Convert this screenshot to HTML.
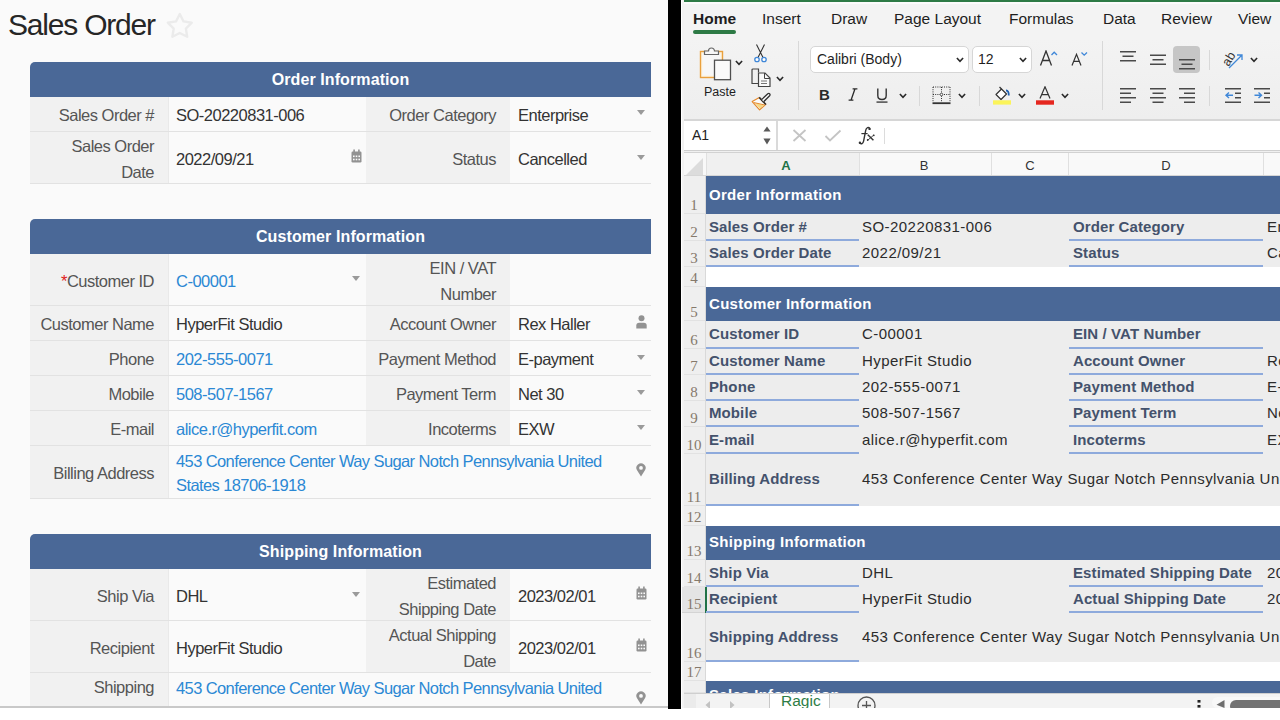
<!DOCTYPE html><html><head><meta charset='utf-8'><style>
*{margin:0;padding:0;box-sizing:border-box}
html,body{width:1280px;height:720px;overflow:hidden;background:#fff;font-family:"Liberation Sans",sans-serif}
.a{position:absolute}
#left{position:absolute;left:0;top:0;width:668px;height:708px;background:#fafafa;overflow:hidden}
.title{position:absolute;left:8px;top:5px;font-size:30px;color:#262626;letter-spacing:-1.2px;white-space:nowrap;line-height:40px}
.hdr{position:absolute;left:30px;width:621px;height:35px;background:#4a6897;border-radius:5px 0 0 0;color:#fff;font-weight:bold;font-size:16px;text-align:center;line-height:35px;letter-spacing:0.1px}
.row{position:absolute;left:30px;width:621px;border-bottom:1px solid #e2e2e2}
.c{position:absolute;top:0;bottom:0;display:flex;align-items:center;font-size:16.5px;line-height:25.5px;letter-spacing:-0.5px;white-space:nowrap;padding-top:4px}
.l1{left:0;width:139px;background:#f1f1f1;justify-content:flex-end;padding-right:14px;color:#555;text-align:right;border-right:1px solid #e9e9e9}
.v1{left:139px;width:197px;padding-left:7px;color:#333}
.l2{left:336px;width:144px;background:#f1f1f1;justify-content:flex-end;padding-right:14px;color:#555;text-align:right}
.v2{left:480px;width:141px;padding-left:8px;color:#333}
.lnk{color:#2b88d4}
.tri{position:absolute;width:0;height:0;border-left:4px solid transparent;border-right:4px solid transparent;border-top:5px solid #9a9a9a}
#blk{position:absolute;left:668px;top:0;width:13px;height:709px;background:#000}
#xl{position:absolute;left:681px;top:0;width:599px;height:708px;background:#f3f3f3;overflow:hidden;border-left:1px solid #fff}
.tab{position:absolute;top:8px;font-size:15px;color:#222;line-height:20px;white-space:nowrap}
.xc{position:absolute;white-space:nowrap;font-size:15px;line-height:20px}
.lab{color:#3d4e6a;font-weight:bold;letter-spacing:0.1px}
.val{color:#222;letter-spacing:0.3px}
.rn{position:absolute;left:2px;width:18px;text-align:center;font-family:"Liberation Serif",serif;font-size:15px;color:#85796b;line-height:16px}
</style></head><body>
<div id='left'>
<div class='title'>Sales Order</div>
<svg class='a' style='left:166px;top:11px' width='28' height='29' viewBox='0 0 28 29'><path d='M13.80 3.00 L17.56 10.42 L25.78 11.71 L19.89 17.58 L21.21 25.79 L13.80 22.00 L6.39 25.79 L7.71 17.58 L1.82 11.71 L10.04 10.42 Z' fill='none' stroke='#ebebeb' stroke-width='2.4' stroke-linejoin='round'/></svg>
<div class='hdr' style='top:62px'>Order Information</div>
<div class='row' style='top:97px;height:35px'>
<div class='c l1' style=''>Sales Order #</div>
<div class='c v1' style=''>SO-20220831-006</div>
<div class='c l2' style=''>Order Category</div>
<div class='c v2' style=''>Enterprise</div>
</div>
<div class='tri' style='left:637px;top:110px'></div>
<div class='row' style='top:132px;height:52px'>
<div class='c l1' style=''>Sales Order<br>Date</div>
<div class='c v1' style=''>2022/09/21</div>
<div class='c l2' style=''>Status</div>
<div class='c v2' style=''>Cancelled</div>
</div>
<svg class='a' style='left:351px;top:149px' width='11' height='14' viewBox='0 0 11 14'><rect x='0.5' y='2.5' width='10' height='11' rx='1.2' fill='#929292'/><rect x='2.3' y='0.5' width='1.6' height='3' fill='#929292'/><rect x='7.1' y='0.5' width='1.6' height='3' fill='#929292'/><g fill='#fafafa'><rect x='2' y='6.5' width='1.6' height='1.6'/><rect x='4.7' y='6.5' width='1.6' height='1.6'/><rect x='7.4' y='6.5' width='1.6' height='1.6'/><rect x='2' y='9.7' width='1.6' height='1.6'/><rect x='4.7' y='9.7' width='1.6' height='1.6'/><rect x='7.4' y='9.7' width='1.6' height='1.6'/></g></svg>
<div class='tri' style='left:637px;top:155px'></div>
<div class='hdr' style='top:219px'>Customer Information</div>
<div class='row' style='top:254px;height:52px'>
<div class='c l1' style=''><span style='color:#e02020'>*</span>Customer ID</div>
<div class='c v1' style=''><span class='lnk'>C-00001</span></div>
<div class='c l2' style=''>EIN / VAT<br>Number</div>
<div class='c v2' style=''></div>
</div>
<div class='tri' style='left:352px;top:276px'></div>
<div class='row' style='top:306px;height:35px'>
<div class='c l1' style=''>Customer Name</div>
<div class='c v1' style=''>HyperFit Studio</div>
<div class='c l2' style=''>Account Owner</div>
<div class='c v2' style=''>Rex Haller</div>
</div>
<svg class='a' style='left:636px;top:315px' width='11' height='14' viewBox='0 0 11 14'><circle cx='5.5' cy='3.3' r='3' fill='#929292'/><path d='M0.3 13.4 V10.6 Q0.3 7.8 3.2 7.8 H7.8 Q10.7 7.8 10.7 10.6 V13.4 Z' fill='#929292'/></svg>
<div class='row' style='top:341px;height:35px'>
<div class='c l1' style=''>Phone</div>
<div class='c v1' style=''><span class='lnk'>202-555-0071</span></div>
<div class='c l2' style=''>Payment Method</div>
<div class='c v2' style=''>E-payment</div>
</div>
<div class='tri' style='left:637px;top:355px'></div>
<div class='row' style='top:376px;height:35px'>
<div class='c l1' style=''>Mobile</div>
<div class='c v1' style=''><span class='lnk'>508-507-1567</span></div>
<div class='c l2' style=''>Payment Term</div>
<div class='c v2' style=''>Net 30</div>
</div>
<div class='tri' style='left:637px;top:390px'></div>
<div class='row' style='top:411px;height:35px'>
<div class='c l1' style=''>E-mail</div>
<div class='c v1' style=''><span class='lnk'>alice.r@hyperfit.com</span></div>
<div class='c l2' style=''>Incoterms</div>
<div class='c v2' style=''>EXW</div>
</div>
<div class='tri' style='left:637px;top:425px'></div>
<div class='row' style='top:446px;height:53px'>
<div class='c l1' style=''>Billing Address</div>
<div class='c' style='left:139px;width:482px;padding-left:7px;color:#2b88d4;white-space:normal;line-height:24.5px;letter-spacing:-0.6px;padding-top:2px'>453 Conference Center Way Sugar Notch Pennsylvania United<br>States 18706-1918</div>
</div>
<svg class='a' style='left:636px;top:463px' width='10' height='14' viewBox='0 0 10 14'><path d='M5 13.6 L1.2 7.6 A4.6 4.6 0 1 1 8.8 7.6 Z' fill='#929292'/><circle cx='5' cy='4.9' r='1.9' fill='#fafafa'/></svg>
<div class='hdr' style='top:534px'>Shipping Information</div>
<div class='row' style='top:569px;height:52px'>
<div class='c l1' style=''>Ship Via</div>
<div class='c v1' style=''>DHL</div>
<div class='c l2' style=''>Estimated<br>Shipping Date</div>
<div class='c v2' style=''>2023/02/01</div>
</div>
<div class='tri' style='left:352px;top:592px'></div>
<svg class='a' style='left:636px;top:586px' width='11' height='14' viewBox='0 0 11 14'><rect x='0.5' y='2.5' width='10' height='11' rx='1.2' fill='#929292'/><rect x='2.3' y='0.5' width='1.6' height='3' fill='#929292'/><rect x='7.1' y='0.5' width='1.6' height='3' fill='#929292'/><g fill='#fafafa'><rect x='2' y='6.5' width='1.6' height='1.6'/><rect x='4.7' y='6.5' width='1.6' height='1.6'/><rect x='7.4' y='6.5' width='1.6' height='1.6'/><rect x='2' y='9.7' width='1.6' height='1.6'/><rect x='4.7' y='9.7' width='1.6' height='1.6'/><rect x='7.4' y='9.7' width='1.6' height='1.6'/></g></svg>
<div class='row' style='top:621px;height:52px'>
<div class='c l1' style=''>Recipient</div>
<div class='c v1' style=''>HyperFit Studio</div>
<div class='c l2' style=''>Actual Shipping<br>Date</div>
<div class='c v2' style=''>2023/02/01</div>
</div>
<svg class='a' style='left:636px;top:638px' width='11' height='14' viewBox='0 0 11 14'><rect x='0.5' y='2.5' width='10' height='11' rx='1.2' fill='#929292'/><rect x='2.3' y='0.5' width='1.6' height='3' fill='#929292'/><rect x='7.1' y='0.5' width='1.6' height='3' fill='#929292'/><g fill='#fafafa'><rect x='2' y='6.5' width='1.6' height='1.6'/><rect x='4.7' y='6.5' width='1.6' height='1.6'/><rect x='7.4' y='6.5' width='1.6' height='1.6'/><rect x='2' y='9.7' width='1.6' height='1.6'/><rect x='4.7' y='9.7' width='1.6' height='1.6'/><rect x='7.4' y='9.7' width='1.6' height='1.6'/></g></svg>
<div class='row' style='top:673px;height:35px;border-bottom:none'>
<div class='c l1' style='top:0;bottom:auto;height:35px;align-items:flex-start;padding-top:2px'>Shipping</div>
<div class='c' style='left:139px;width:482px;padding-left:7px;color:#2b88d4;align-items:flex-start;padding-top:3px;letter-spacing:-0.6px'>453 Conference Center Way Sugar Notch Pennsylvania United</div>
</div>
<svg class='a' style='left:636px;top:691px' width='10' height='14' viewBox='0 0 10 14'><path d='M5 13.6 L1.2 7.6 A4.6 4.6 0 1 1 8.8 7.6 Z' fill='#929292'/><circle cx='5' cy='4.9' r='1.9' fill='#fafafa'/></svg>
<div class='a' style='left:0;top:706px;width:668px;height:2px;background:#c9c9c9'></div>
</div>
<div id='blk'></div>
<div id='xl'>
<div class='a' style='left:2px;top:0px;width:596px;height:2px;background:#2d7a45'></div>
<div class='a' style='left:2px;top:2px;width:596px;height:2px;background:#fbfbfb'></div>
<div class='a' style='left:2px;top:4px;width:596px;height:115px;background:linear-gradient(#f3f3f3 0px,#f3f3f3 35px,#eeeeee 115px)'></div>
<div class='a' style='left:0px;top:0px;width:2px;height:708px;background:#f2f2f2'></div>
<div class='a' style='left:11px;top:8.5px;white-space:nowrap;font-size:15.5px;line-height:20px;color:#1e1e1e;font-weight:bold'>Home</div>
<div class='a' style='left:80px;top:8.5px;white-space:nowrap;font-size:15.5px;line-height:20px;color:#1e1e1e;'>Insert</div>
<div class='a' style='left:149px;top:8.5px;white-space:nowrap;font-size:15.5px;line-height:20px;color:#1e1e1e;'>Draw</div>
<div class='a' style='left:212px;top:8.5px;white-space:nowrap;font-size:15.5px;line-height:20px;color:#1e1e1e;'>Page Layout</div>
<div class='a' style='left:327px;top:8.5px;white-space:nowrap;font-size:15.5px;line-height:20px;color:#1e1e1e;'>Formulas</div>
<div class='a' style='left:421px;top:8.5px;white-space:nowrap;font-size:15.5px;line-height:20px;color:#1e1e1e;'>Data</div>
<div class='a' style='left:479px;top:8.5px;white-space:nowrap;font-size:15.5px;line-height:20px;color:#1e1e1e;'>Review</div>
<div class='a' style='left:556px;top:8.5px;white-space:nowrap;font-size:15.5px;line-height:20px;color:#1e1e1e;'>View</div>
<div class='a' style='left:11px;top:30px;width:43px;height:4px;background:#2d7a45;border-radius:2px'></div>
<div class='a' style='left:2px;top:119px;width:596px;height:2px;background:#d6d6d6'></div>
<div class='a' style='left:2px;top:121px;width:596px;height:29px;background:#fff'></div>
<div class='a' style='left:2px;top:150px;width:596px;height:1px;background:#cfcfcf'></div>
<div class='a' style='left:2px;top:151px;width:596px;height:1px;background:#f0f0f0'></div>
<div class='a' style='left:2px;top:152px;width:596px;height:1px;background:#d2d2d2'></div>
<div class='a' style='left:94px;top:121px;width:2px;height:29px;background:#dadada'></div>
<div class='a' style='left:10px;top:125px;white-space:nowrap;font-size:14px;line-height:20px;color:#222'>A1</div>
<svg class='a' style='left:81px;top:126px' width='8' height='19' viewBox='0 0 8 19'><path d='M4 0.5 L7.6 5.6 H0.4 Z M4 18.5 L7.6 12.4 H0.4 Z' fill='#5a5a5a'/></svg>
<svg class='a' style='left:110px;top:129px' width='15' height='13' viewBox='0 0 15 13'><path d='M1.5 1 L13.5 12 M13.5 1 L1.5 12' stroke='#c4c4c4' stroke-width='1.8'/></svg>
<svg class='a' style='left:142px;top:129px' width='18' height='13' viewBox='0 0 18 13'><path d='M1.5 7 L6 11.5 L16.5 1.5' stroke='#c4c4c4' stroke-width='1.8' fill='none'/></svg>
<svg class='a' style='left:170px;top:122px' width='30' height='26' viewBox='0 0 30 26'><g fill='none' stroke='#333'><path d='M17.8 6.4 C16.6 4.9 14.3 5.1 13.7 8.4 L11.6 19.2 C11.1 21.8 9.2 22.3 7.8 21.2' stroke-width='1.4'/><path d='M9.4 11.6 H15.6' stroke-width='1.2'/><path d='M15.8 12.8 L21.4 18.3' stroke-width='1.5'/><path d='M22 12.9 L15.6 18.3' stroke-width='0.9'/></g><g fill='#333'><circle cx='17.6' cy='6.9' r='1.2'/><circle cx='7.9' cy='20.8' r='1.2'/><circle cx='21.8' cy='13.3' r='0.9'/><circle cx='15.7' cy='18' r='0.9'/></g></svg>
<div class='a' style='left:202px;top:128px;width:1px;height:16px;background:#dcdcdc'></div>
<div class='a' style='left:116px;top:41px;width:1px;height:69px;background:#d8d8d8'></div>
<div class='a' style='left:420px;top:41px;width:1px;height:69px;background:#d8d8d8'></div>
<div class='a' style='left:237px;top:86px;width:1px;height:20px;background:#d8d8d8'></div>
<div class='a' style='left:297px;top:86px;width:1px;height:20px;background:#d8d8d8'></div>
<div class='a' style='left:527px;top:50px;width:1px;height:20px;background:#d8d8d8'></div>
<div class='a' style='left:527px;top:86px;width:1px;height:20px;background:#d8d8d8'></div>
<svg class='a' style='left:17px;top:45px' width='34' height='37' viewBox='0 0 34 37'><rect x='1.5' y='6.5' width='22' height='26' fill='#fdf3df' stroke='#e9a03d' stroke-width='1.4'/><rect x='3.5' y='8.5' width='18' height='22' fill='#f7f7f7'/><path d='M5.5 9.5 V6 H9.5 A3 3 0 0 1 15.5 6 H19.5 V9.5 Z' fill='#f7f7f7' stroke='#666' stroke-width='1.2'/><rect x='15.5' y='15.2' width='16' height='19.5' fill='#fafafa' stroke='#4f4f4f' stroke-width='1.3'/></svg>
<svg class='a' style='left:53px;top:60px' width='8' height='6' viewBox='0 0 8 6'><path d='M0.9 1 L4 4.3 L7.1 1' fill='none' stroke='#2a2a2a' stroke-width='1.6'/></svg>
<div class='a' style='left:22px;top:84px;white-space:nowrap;font-size:12.5px;line-height:16px;color:#1e1e1e'>Paste</div>
<svg class='a' style='left:71px;top:44px' width='15' height='19' viewBox='0 0 15 19'><path d='M3.5 0.5 L10 13.5 M11.5 0.5 L5 13.5' stroke='#333' stroke-width='1.1'/><circle cx='4' cy='15.5' r='2.2' fill='#fff' stroke='#3f87d8' stroke-width='1.3'/><circle cx='11' cy='15.5' r='2.2' fill='#fff' stroke='#3f87d8' stroke-width='1.3'/></svg>
<svg class='a' style='left:69px;top:68px' width='21' height='20' viewBox='0 0 21 20'><path d='M7.5 4.5 V1 H2 Q1 1 1 2 V15.5 H7' fill='none' stroke='#444' stroke-width='1.2'/><path d='M7.5 5 H14 L19 10 V18.5 H7.5 Z' fill='#fafafa' stroke='#444' stroke-width='1.2'/><path d='M13.5 5 V10.5 H19' fill='none' stroke='#444' stroke-width='1'/><path d='M10 13 H16 M10 15.5 H16' stroke='#666' stroke-width='0.9'/></svg>
<svg class='a' style='left:94px;top:76px' width='8' height='6' viewBox='0 0 8 6'><path d='M0.9 1 L4 4.3 L7.1 1' fill='none' stroke='#2a2a2a' stroke-width='1.6'/></svg>
<svg class='a' style='left:66px;top:90px' width='26' height='24' viewBox='0 0 26 24'><path d='M4.2 11.6 L11.3 7.6 L17.8 14.4 L11.6 19.8 Z' fill='#fbfbfb' stroke='#e5892c' stroke-width='1.2' stroke-linejoin='round'/><path d='M6.8 12.9 L16.2 15.2 L11.8 18.6 Z' fill='#f5d985'/><path d='M6 12.6 L16.8 15' stroke='#e5892c' stroke-width='1'/><path d='M11.2 7.4 L17.9 14.5' stroke='#2f2f2f' stroke-width='1.6'/><path d='M13.6 9.6 L19.8 3.8 Q20.9 3 21.7 3.9 Q22.4 4.8 21.6 5.7 L15.6 11.8' fill='#fbfbfb' stroke='#2f2f2f' stroke-width='1.3' stroke-linejoin='round'/></svg>
<div class='a' style='left:128px;top:46px;width:159px;height:27px;background:#fff;border:1px solid #d6d6d6;border-radius:5px'></div>
<div class='a' style='left:135px;top:50px;white-space:nowrap;font-size:14px;line-height:18px;color:#1e1e1e'>Calibri (Body)</div>
<svg class='a' style='left:274px;top:57px' width='8' height='6' viewBox='0 0 8 6'><path d='M0.9 1 L4 4.3 L7.1 1' fill='none' stroke='#2a2a2a' stroke-width='1.6'/></svg>
<div class='a' style='left:290px;top:46px;width:60px;height:27px;background:#fff;border:1px solid #d6d6d6;border-radius:5px'></div>
<div class='a' style='left:296px;top:50px;white-space:nowrap;font-size:14px;line-height:18px;color:#1e1e1e'>12</div>
<svg class='a' style='left:337px;top:57px' width='8' height='6' viewBox='0 0 8 6'><path d='M0.9 1 L4 4.3 L7.1 1' fill='none' stroke='#2a2a2a' stroke-width='1.6'/></svg>
<svg class='a' style='left:357px;top:50px' width='20' height='17' viewBox='0 0 20 17'><path d='M1.5 15.5 L7 1 L12.5 15.5 M3.5 10.5 H10.5' fill='none' stroke='#333' stroke-width='1.3'/><path d='M12.5 5 L15.2 2.2 L18 5' fill='none' stroke='#3f87d8' stroke-width='1.3'/></svg>
<svg class='a' style='left:389px;top:50px' width='17' height='17' viewBox='0 0 17 17'><path d='M1 15.5 L5.5 4.3 L10 15.5 M2.8 11.3 H8.2' fill='none' stroke='#333' stroke-width='1.2'/><path d='M10.5 2.5 L13.2 5.2 L16 2.5' fill='none' stroke='#3f87d8' stroke-width='1.3'/></svg>
<div class='a' style='left:137px;top:86px;white-space:nowrap;font-size:15px;line-height:18px;font-weight:bold;color:#2a2a2a'>B</div>
<svg class='a' style='left:166px;top:88px' width='10' height='13' viewBox='0 0 10 13'><path d='M4.6 0.8 H9.4 M0.6 12.2 H5.4 M7 0.8 L3 12.2' fill='none' stroke='#2a2a2a' stroke-width='1.3'/></svg>
<svg class='a' style='left:194px;top:88px' width='12' height='16' viewBox='0 0 12 16'><path d='M1.8 0.5 V7.5 Q1.8 11.5 6 11.5 Q10.2 11.5 10.2 7.5 V0.5' fill='none' stroke='#333' stroke-width='1.4'/><rect x='0.5' y='13.3' width='11' height='1.6' fill='#555'/></svg>
<svg class='a' style='left:217px;top:93px' width='8' height='6' viewBox='0 0 8 6'><path d='M0.9 1 L4 4.3 L7.1 1' fill='none' stroke='#2a2a2a' stroke-width='1.6'/></svg>
<svg class='a' style='left:250px;top:86px' width='19' height='19' viewBox='0 0 19 19'><g stroke='#333' stroke-width='1' stroke-dasharray='1 1.2' fill='none'><path d='M1 1 H18 M1 1 V16 M18 1 V16 M9.5 1 V16 M1 8.5 H18'/></g><circle cx='9.5' cy='8.5' r='1.3' fill='#fff' stroke='#333' stroke-width='0.8'/><rect x='0.5' y='16.3' width='18' height='1.8' fill='#333'/></svg>
<svg class='a' style='left:276px;top:93px' width='8' height='6' viewBox='0 0 8 6'><path d='M0.9 1 L4 4.3 L7.1 1' fill='none' stroke='#2a2a2a' stroke-width='1.6'/></svg>
<svg class='a' style='left:311px;top:86px' width='19' height='19' viewBox='0 0 19 19'><path d='M3 8.5 L8.5 3 L13.5 8 L8 13.5 Z' fill='#fff' stroke='#333' stroke-width='1.2' stroke-linejoin='round'/><path d='M8.5 3 L6.5 1' stroke='#333' stroke-width='1.2'/><path d='M13 4.5 Q15.8 4.3 15.8 9.5' fill='none' stroke='#1f5fb0' stroke-width='1.8'/><rect x='0' y='14.3' width='18' height='4.3' fill='#fbf45a'/></svg>
<svg class='a' style='left:336px;top:93px' width='8' height='6' viewBox='0 0 8 6'><path d='M0.9 1 L4 4.3 L7.1 1' fill='none' stroke='#2a2a2a' stroke-width='1.6'/></svg>
<svg class='a' style='left:353px;top:86px' width='19' height='19' viewBox='0 0 19 19'><path d='M5 12.5 L10 0.8 L15 12.5 M6.7 8.6 H13.3' fill='none' stroke='#333' stroke-width='1.2'/><rect x='1' y='14.3' width='18' height='4.4' fill='#e5271f'/></svg>
<svg class='a' style='left:379px;top:93px' width='8' height='6' viewBox='0 0 8 6'><path d='M0.9 1 L4 4.3 L7.1 1' fill='none' stroke='#2a2a2a' stroke-width='1.6'/></svg>
<svg class='a' style='left:437px;top:40px' width='20' height='70' viewBox='0 0 20 70'><rect x='1' y='11' width='16' height='1.5' fill='#4a4a4a'/><rect x='3.5' y='15.5' width='11.0' height='1.5' fill='#4a4a4a'/><rect x='1' y='20' width='16' height='1.5' fill='#4a4a4a'/></svg>
<svg class='a' style='left:467px;top:40px' width='20' height='70' viewBox='0 0 20 70'><rect x='1' y='14.5' width='16' height='1.5' fill='#4a4a4a'/><rect x='3.5' y='19' width='11.0' height='1.5' fill='#4a4a4a'/><rect x='1' y='23.5' width='16' height='1.5' fill='#4a4a4a'/></svg>
<div class='a' style='left:491px;top:46px;width:27px;height:27px;background:#c6c6c6;border-radius:4px'></div>
<svg class='a' style='left:496px;top:40px' width='20' height='70' viewBox='0 0 20 70'><rect x='1' y='19' width='16' height='1.5' fill='#4a4a4a'/><rect x='3.5' y='23.5' width='11.0' height='1.5' fill='#4a4a4a'/><rect x='1' y='28' width='16' height='1.5' fill='#4a4a4a'/></svg>
<svg class='a' style='left:437px;top:40px' width='20' height='70' viewBox='0 0 20 70'><rect x='1' y='48' width='16' height='1.5' fill='#4a4a4a'/><rect x='1' y='52.5' width='11' height='1.5' fill='#4a4a4a'/><rect x='1' y='57' width='16' height='1.5' fill='#4a4a4a'/><rect x='1' y='61.5' width='11' height='1.5' fill='#4a4a4a'/></svg>
<svg class='a' style='left:467px;top:40px' width='20' height='70' viewBox='0 0 20 70'><rect x='1' y='48' width='16' height='1.5' fill='#4a4a4a'/><rect x='3.5' y='52.5' width='11.0' height='1.5' fill='#4a4a4a'/><rect x='1' y='57' width='16' height='1.5' fill='#4a4a4a'/><rect x='3.5' y='61.5' width='11.0' height='1.5' fill='#4a4a4a'/></svg>
<svg class='a' style='left:496px;top:40px' width='20' height='70' viewBox='0 0 20 70'><rect x='1' y='48' width='16' height='1.5' fill='#4a4a4a'/><rect x='6' y='52.5' width='11' height='1.5' fill='#4a4a4a'/><rect x='1' y='57' width='16' height='1.5' fill='#4a4a4a'/><rect x='6' y='61.5' width='11' height='1.5' fill='#4a4a4a'/></svg>
<svg class='a' style='left:540px;top:49px' width='22' height='20' viewBox='0 0 22 20'><text x='0' y='0' transform='translate(6.5,18) rotate(-58)' font-family='Liberation Sans' font-size='12.5' fill='#333'>ab</text><path d='M7 19 L19.5 6.5 M15 6 H20 V11' fill='none' stroke='#3f87d8' stroke-width='1.3'/></svg>
<svg class='a' style='left:568px;top:57px' width='8' height='6' viewBox='0 0 8 6'><path d='M0.9 1 L4 4.3 L7.1 1' fill='none' stroke='#2a2a2a' stroke-width='1.6'/></svg>
<svg class='a' style='left:542px;top:86px' width='19' height='20' viewBox='0 0 19 20'><rect x='1' y='2' width='16' height='1.5' fill='#4a4a4a'/><rect x='11' y='6.5' width='6' height='1.5' fill='#4a4a4a'/><rect x='11' y='11' width='6' height='1.5' fill='#4a4a4a'/><rect x='1' y='15.5' width='16' height='1.5' fill='#4a4a4a'/><path d='M2 9.2 H9 M5 6.5 L2 9.2 L5 12' fill='none' stroke='#3f87d8' stroke-width='1.4'/></svg>
<svg class='a' style='left:571px;top:86px' width='19' height='20' viewBox='0 0 19 20'><rect x='1' y='2' width='16' height='1.5' fill='#4a4a4a'/><rect x='11' y='6.5' width='6' height='1.5' fill='#4a4a4a'/><rect x='11' y='11' width='6' height='1.5' fill='#4a4a4a'/><rect x='1' y='15.5' width='16' height='1.5' fill='#4a4a4a'/><path d='M1.5 9.2 H8.5 M5.5 6.5 L8.5 9.2 L5.5 12' fill='none' stroke='#3f87d8' stroke-width='1.4'/></svg>
<div class='a' style='left:2px;top:153px;width:596px;height:23px;background:#f9f9f9'></div>
<div class='a' style='left:2px;top:153px;width:22px;height:23px;background:#f8f8f8'></div>
<div class='a' style='left:24px;top:153px;width:153px;height:23px;background:#f0f0f0'></div>
<svg class='a' style='left:4px;top:158px' width='18' height='17' viewBox='0 0 18 17'><path d='M17 0 V17 H0 Z' fill='#dcdcdc'/></svg>
<div class='a' style='left:24px;top:153px;width:1px;height:23px;background:#e0e0e0'></div>
<div class='a' style='left:177px;top:153px;width:1px;height:23px;background:#e0e0e0'></div>
<div class='a' style='left:309px;top:153px;width:1px;height:23px;background:#e0e0e0'></div>
<div class='a' style='left:386px;top:153px;width:1px;height:23px;background:#e0e0e0'></div>
<div class='a' style='left:581px;top:153px;width:1px;height:23px;background:#e0e0e0'></div>
<div class='a' style='left:94px;top:157px;white-space:nowrap;width:20px;text-align:center;font-size:13px;line-height:18px;color:#217346;font-weight:bold'>A</div>
<div class='a' style='left:232px;top:157px;white-space:nowrap;width:20px;text-align:center;font-size:13px;line-height:18px;color:#333;'>B</div>
<div class='a' style='left:338px;top:157px;white-space:nowrap;width:20px;text-align:center;font-size:13px;line-height:18px;color:#333;'>C</div>
<div class='a' style='left:474px;top:157px;white-space:nowrap;width:20px;text-align:center;font-size:13px;line-height:18px;color:#333;'>D</div>
<div class='a' style='left:2px;top:175px;width:596px;height:1px;background:#d6d6d6'></div>
<div class='a' style='left:2px;top:176px;width:22px;height:517px;background:#efefef'></div>
<div class='a' style='left:23px;top:176px;width:1px;height:517px;background:#d9d9d9'></div>
<div class='a' style='left:24px;top:176px;width:574px;height:38px;background:#4a6897'></div>
<div class='a' style='left:2px;top:213px;width:21px;height:1px;background:#e2e2e2'></div>
<div class='rn' style='left:3px;top:197px'>1</div>
<div class='a' style='left:24px;top:214px;width:574px;height:27px;background:#ededed'></div>
<div class='a' style='left:2px;top:240px;width:21px;height:1px;background:#e2e2e2'></div>
<div class='rn' style='left:3px;top:224px'>2</div>
<div class='a' style='left:24px;top:241px;width:574px;height:26px;background:#ededed'></div>
<div class='a' style='left:2px;top:266px;width:21px;height:1px;background:#e2e2e2'></div>
<div class='rn' style='left:3px;top:250px'>3</div>
<div class='a' style='left:24px;top:267px;width:574px;height:20px;background:#fff'></div>
<div class='a' style='left:2px;top:286px;width:21px;height:1px;background:#e2e2e2'></div>
<div class='rn' style='left:3px;top:270px'>4</div>
<div class='a' style='left:24px;top:287px;width:574px;height:34px;background:#4a6897'></div>
<div class='a' style='left:2px;top:320px;width:21px;height:1px;background:#e2e2e2'></div>
<div class='rn' style='left:3px;top:304px'>5</div>
<div class='a' style='left:24px;top:321px;width:574px;height:28px;background:#ededed'></div>
<div class='a' style='left:2px;top:348px;width:21px;height:1px;background:#e2e2e2'></div>
<div class='rn' style='left:3px;top:332px'>6</div>
<div class='a' style='left:24px;top:349px;width:574px;height:26px;background:#ededed'></div>
<div class='a' style='left:2px;top:374px;width:21px;height:1px;background:#e2e2e2'></div>
<div class='rn' style='left:3px;top:358px'>7</div>
<div class='a' style='left:24px;top:375px;width:574px;height:26px;background:#ededed'></div>
<div class='a' style='left:2px;top:400px;width:21px;height:1px;background:#e2e2e2'></div>
<div class='rn' style='left:3px;top:384px'>8</div>
<div class='a' style='left:24px;top:401px;width:574px;height:26px;background:#ededed'></div>
<div class='a' style='left:2px;top:426px;width:21px;height:1px;background:#e2e2e2'></div>
<div class='rn' style='left:3px;top:410px'>9</div>
<div class='a' style='left:24px;top:427px;width:574px;height:27px;background:#ededed'></div>
<div class='a' style='left:2px;top:453px;width:21px;height:1px;background:#e2e2e2'></div>
<div class='rn' style='left:3px;top:437px'>10</div>
<div class='a' style='left:24px;top:454px;width:574px;height:52px;background:#ededed'></div>
<div class='a' style='left:2px;top:505px;width:21px;height:1px;background:#e2e2e2'></div>
<div class='rn' style='left:3px;top:489px'>11</div>
<div class='a' style='left:24px;top:506px;width:574px;height:20px;background:#fff'></div>
<div class='a' style='left:2px;top:525px;width:21px;height:1px;background:#e2e2e2'></div>
<div class='rn' style='left:3px;top:509px'>12</div>
<div class='a' style='left:24px;top:526px;width:574px;height:34px;background:#4a6897'></div>
<div class='a' style='left:2px;top:559px;width:21px;height:1px;background:#e2e2e2'></div>
<div class='rn' style='left:3px;top:543px'>13</div>
<div class='a' style='left:24px;top:560px;width:574px;height:27px;background:#ededed'></div>
<div class='a' style='left:2px;top:586px;width:21px;height:1px;background:#e2e2e2'></div>
<div class='rn' style='left:3px;top:570px'>14</div>
<div class='a' style='left:24px;top:587px;width:574px;height:26px;background:#ededed'></div>
<div class='a' style='left:2px;top:612px;width:21px;height:1px;background:#e2e2e2'></div>
<div class='a' style='left:-1px;top:587px;width:24px;height:26px;background:#e4e4e4;border-bottom:1px solid #d4d4d4'></div>
<div class='a' style='left:23px;top:587px;width:2px;height:26px;background:#217346'></div>
<div class='rn' style='left:3px;top:596px'>15</div>
<div class='a' style='left:24px;top:613px;width:574px;height:49px;background:#ededed'></div>
<div class='a' style='left:2px;top:661px;width:21px;height:1px;background:#e2e2e2'></div>
<div class='rn' style='left:3px;top:645px'>16</div>
<div class='a' style='left:24px;top:662px;width:574px;height:19px;background:#fff'></div>
<div class='a' style='left:2px;top:680px;width:21px;height:1px;background:#e2e2e2'></div>
<div class='rn' style='left:3px;top:664px'>17</div>
<div class='a' style='left:24px;top:681px;width:574px;height:12px;background:#4a6897'></div>
<div class='a' style='left:2px;top:692px;width:21px;height:1px;background:#e2e2e2'></div>
<div class='a' style='left:27px;top:184px;white-space:nowrap;font-size:15px;line-height:20px;color:#fff;font-weight:bold;letter-spacing:0.3px;margin-top:1px'>Order Information</div>
<div class='a' style='left:27px;top:293px;white-space:nowrap;font-size:15px;line-height:20px;color:#fff;font-weight:bold;letter-spacing:0.3px;margin-top:1px'>Customer Information</div>
<div class='a' style='left:27px;top:531px;white-space:nowrap;font-size:15px;line-height:20px;color:#fff;font-weight:bold;letter-spacing:0.3px;margin-top:1px'>Shipping Information</div>
<div class='a' style='left:27px;top:684px;white-space:nowrap;font-size:15px;line-height:20px;color:#fff;font-weight:bold;letter-spacing:0.3px;margin-top:1px'>Sales Information</div>
<div class='a' style='left:27px;top:217px;white-space:nowrap;font-size:15px;line-height:20px;color:#44526c;font-weight:bold;letter-spacing:0.1px'>Sales Order #</div>
<div class='a' style='left:180px;top:217px;white-space:nowrap;font-size:15px;line-height:20px;color:#2b2b2b;letter-spacing:0.45px'>SO-20220831-006</div>
<div class='a' style='left:391px;top:217px;white-space:nowrap;font-size:15px;line-height:20px;color:#44526c;font-weight:bold;letter-spacing:0.1px'>Order Category</div>
<div class='a' style='left:585px;top:217px;white-space:nowrap;font-size:15px;line-height:20px;color:#2b2b2b;letter-spacing:0.45px'>Enterprise</div>
<div class='a' style='left:24px;top:239px;width:153px;height:2px;background:#8eaadc'></div>
<div class='a' style='left:387px;top:239px;width:194px;height:2px;background:#8eaadc'></div>
<div class='a' style='left:27px;top:243px;white-space:nowrap;font-size:15px;line-height:20px;color:#44526c;font-weight:bold;letter-spacing:0.1px'>Sales Order Date</div>
<div class='a' style='left:180px;top:243px;white-space:nowrap;font-size:15px;line-height:20px;color:#2b2b2b;letter-spacing:0.45px'>2022/09/21</div>
<div class='a' style='left:391px;top:243px;white-space:nowrap;font-size:15px;line-height:20px;color:#44526c;font-weight:bold;letter-spacing:0.1px'>Status</div>
<div class='a' style='left:585px;top:243px;white-space:nowrap;font-size:15px;line-height:20px;color:#2b2b2b;letter-spacing:0.45px'>Cancelled</div>
<div class='a' style='left:24px;top:265px;width:153px;height:2px;background:#8eaadc'></div>
<div class='a' style='left:387px;top:265px;width:194px;height:2px;background:#8eaadc'></div>
<div class='a' style='left:27px;top:324px;white-space:nowrap;font-size:15px;line-height:20px;color:#44526c;font-weight:bold;letter-spacing:0.1px'>Customer ID</div>
<div class='a' style='left:180px;top:324px;white-space:nowrap;font-size:15px;line-height:20px;color:#2b2b2b;letter-spacing:0.45px'>C-00001</div>
<div class='a' style='left:391px;top:324px;white-space:nowrap;font-size:15px;line-height:20px;color:#44526c;font-weight:bold;letter-spacing:0.1px'>EIN / VAT Number</div>
<div class='a' style='left:24px;top:347px;width:153px;height:2px;background:#8eaadc'></div>
<div class='a' style='left:387px;top:347px;width:194px;height:2px;background:#8eaadc'></div>
<div class='a' style='left:27px;top:351px;white-space:nowrap;font-size:15px;line-height:20px;color:#44526c;font-weight:bold;letter-spacing:0.1px'>Customer Name</div>
<div class='a' style='left:180px;top:351px;white-space:nowrap;font-size:15px;line-height:20px;color:#2b2b2b;letter-spacing:0.45px'>HyperFit Studio</div>
<div class='a' style='left:391px;top:351px;white-space:nowrap;font-size:15px;line-height:20px;color:#44526c;font-weight:bold;letter-spacing:0.1px'>Account Owner</div>
<div class='a' style='left:585px;top:351px;white-space:nowrap;font-size:15px;line-height:20px;color:#2b2b2b;letter-spacing:0.45px'>Rex Haller</div>
<div class='a' style='left:24px;top:373px;width:153px;height:2px;background:#8eaadc'></div>
<div class='a' style='left:387px;top:373px;width:194px;height:2px;background:#8eaadc'></div>
<div class='a' style='left:27px;top:377px;white-space:nowrap;font-size:15px;line-height:20px;color:#44526c;font-weight:bold;letter-spacing:0.1px'>Phone</div>
<div class='a' style='left:180px;top:377px;white-space:nowrap;font-size:15px;line-height:20px;color:#2b2b2b;letter-spacing:0.45px'>202-555-0071</div>
<div class='a' style='left:391px;top:377px;white-space:nowrap;font-size:15px;line-height:20px;color:#44526c;font-weight:bold;letter-spacing:0.1px'>Payment Method</div>
<div class='a' style='left:585px;top:377px;white-space:nowrap;font-size:15px;line-height:20px;color:#2b2b2b;letter-spacing:0.45px'>E-payment</div>
<div class='a' style='left:24px;top:399px;width:153px;height:2px;background:#8eaadc'></div>
<div class='a' style='left:387px;top:399px;width:194px;height:2px;background:#8eaadc'></div>
<div class='a' style='left:27px;top:403px;white-space:nowrap;font-size:15px;line-height:20px;color:#44526c;font-weight:bold;letter-spacing:0.1px'>Mobile</div>
<div class='a' style='left:180px;top:403px;white-space:nowrap;font-size:15px;line-height:20px;color:#2b2b2b;letter-spacing:0.45px'>508-507-1567</div>
<div class='a' style='left:391px;top:403px;white-space:nowrap;font-size:15px;line-height:20px;color:#44526c;font-weight:bold;letter-spacing:0.1px'>Payment Term</div>
<div class='a' style='left:585px;top:403px;white-space:nowrap;font-size:15px;line-height:20px;color:#2b2b2b;letter-spacing:0.45px'>Net 30</div>
<div class='a' style='left:24px;top:425px;width:153px;height:2px;background:#8eaadc'></div>
<div class='a' style='left:387px;top:425px;width:194px;height:2px;background:#8eaadc'></div>
<div class='a' style='left:27px;top:430px;white-space:nowrap;font-size:15px;line-height:20px;color:#44526c;font-weight:bold;letter-spacing:0.1px'>E-mail</div>
<div class='a' style='left:180px;top:430px;white-space:nowrap;font-size:15px;line-height:20px;color:#2b2b2b;letter-spacing:0.45px'>alice.r@hyperfit.com</div>
<div class='a' style='left:391px;top:430px;white-space:nowrap;font-size:15px;line-height:20px;color:#44526c;font-weight:bold;letter-spacing:0.1px'>Incoterms</div>
<div class='a' style='left:585px;top:430px;white-space:nowrap;font-size:15px;line-height:20px;color:#2b2b2b;letter-spacing:0.45px'>EXW</div>
<div class='a' style='left:24px;top:452px;width:153px;height:2px;background:#8eaadc'></div>
<div class='a' style='left:387px;top:452px;width:194px;height:2px;background:#8eaadc'></div>
<div class='a' style='left:27px;top:469px;white-space:nowrap;font-size:15px;line-height:20px;color:#44526c;font-weight:bold;letter-spacing:0.1px'>Billing Address</div>
<div class='a' style='left:180px;top:469px;white-space:nowrap;font-size:15px;line-height:20px;color:#2b2b2b;letter-spacing:0.45px'>453 Conference Center Way Sugar Notch Pennsylvania United States 18706-1918</div>
<div class='a' style='left:24px;top:504px;width:153px;height:2px;background:#8eaadc'></div>
<div class='a' style='left:27px;top:563px;white-space:nowrap;font-size:15px;line-height:20px;color:#44526c;font-weight:bold;letter-spacing:0.1px'>Ship Via</div>
<div class='a' style='left:180px;top:563px;white-space:nowrap;font-size:15px;line-height:20px;color:#2b2b2b;letter-spacing:0.45px'>DHL</div>
<div class='a' style='left:391px;top:563px;white-space:nowrap;font-size:15px;line-height:20px;color:#44526c;font-weight:bold;letter-spacing:0.1px'>Estimated Shipping Date</div>
<div class='a' style='left:585px;top:563px;white-space:nowrap;font-size:15px;line-height:20px;color:#2b2b2b;letter-spacing:0.45px'>2023/02/01</div>
<div class='a' style='left:24px;top:585px;width:153px;height:2px;background:#8eaadc'></div>
<div class='a' style='left:387px;top:585px;width:194px;height:2px;background:#8eaadc'></div>
<div class='a' style='left:27px;top:589px;white-space:nowrap;font-size:15px;line-height:20px;color:#44526c;font-weight:bold;letter-spacing:0.1px'>Recipient</div>
<div class='a' style='left:180px;top:589px;white-space:nowrap;font-size:15px;line-height:20px;color:#2b2b2b;letter-spacing:0.45px'>HyperFit Studio</div>
<div class='a' style='left:391px;top:589px;white-space:nowrap;font-size:15px;line-height:20px;color:#44526c;font-weight:bold;letter-spacing:0.1px'>Actual Shipping Date</div>
<div class='a' style='left:585px;top:589px;white-space:nowrap;font-size:15px;line-height:20px;color:#2b2b2b;letter-spacing:0.45px'>2023/02/01</div>
<div class='a' style='left:24px;top:611px;width:153px;height:2px;background:#8eaadc'></div>
<div class='a' style='left:387px;top:611px;width:194px;height:2px;background:#8eaadc'></div>
<div class='a' style='left:27px;top:627px;white-space:nowrap;font-size:15px;line-height:20px;color:#44526c;font-weight:bold;letter-spacing:0.1px'>Shipping Address</div>
<div class='a' style='left:180px;top:627px;white-space:nowrap;font-size:15px;line-height:20px;color:#2b2b2b;letter-spacing:0.45px'>453 Conference Center Way Sugar Notch Pennsylvania United States 18706-1918</div>
<div class='a' style='left:24px;top:660px;width:153px;height:2px;background:#8eaadc'></div>
<div class='a' style='left:2px;top:693px;width:596px;height:1px;background:#cfcfcf'></div>
<div class='a' style='left:2px;top:694px;width:596px;height:14px;background:#f3f3f3'></div>
<div class='a' style='left:2px;top:694px;width:12px;height:14px;background:#ebebeb'></div>
<svg class='a' style='left:23px;top:701px' width='30' height='8' viewBox='0 0 30 8'><path d='M5 0 V8 L0.5 4 Z M25 0 V8 L29.5 4 Z' fill='#c2c2c2'/></svg>
<div class='a' style='left:87px;top:694px;width:61px;height:14px;background:#fff;border-left:1px solid #c8c8c8;border-right:1px solid #c8c8c8'></div>
<div class='a' style='left:99px;top:691px;white-space:nowrap;font-size:15.5px;line-height:20px;color:#2e7d46'>Ragic</div>
<svg class='a' style='left:175px;top:696px' width='20' height='14' viewBox='0 0 20 14'><circle cx='9.5' cy='9.5' r='8.5' fill='none' stroke='#555' stroke-width='1.3'/><path d='M9.5 5 V14 M5 9.5 H14' stroke='#555' stroke-width='1.3'/></svg>
<svg class='a' style='left:515px;top:700px' width='4' height='8' viewBox='0 0 4 8'><rect x='0.5' y='0' width='3' height='2.6' fill='#222'/><rect x='0.5' y='5' width='3' height='2.6' fill='#222'/></svg>
<div class='a' style='left:530px;top:697px;width:68px;height:11px;background:#f8f8f8;border-radius:8px 0 0 8px'></div>
<svg class='a' style='left:534px;top:700px' width='9' height='8' viewBox='0 0 9 8'><path d='M8.5 0 V8 H8.5 L0.5 4.8 Z' fill='#6e6e6e'/></svg>
<div class='a' style='left:548px;top:700px;width:60px;height:12px;background:#737373;border-radius:6px'></div>
</div>
</body></html>
